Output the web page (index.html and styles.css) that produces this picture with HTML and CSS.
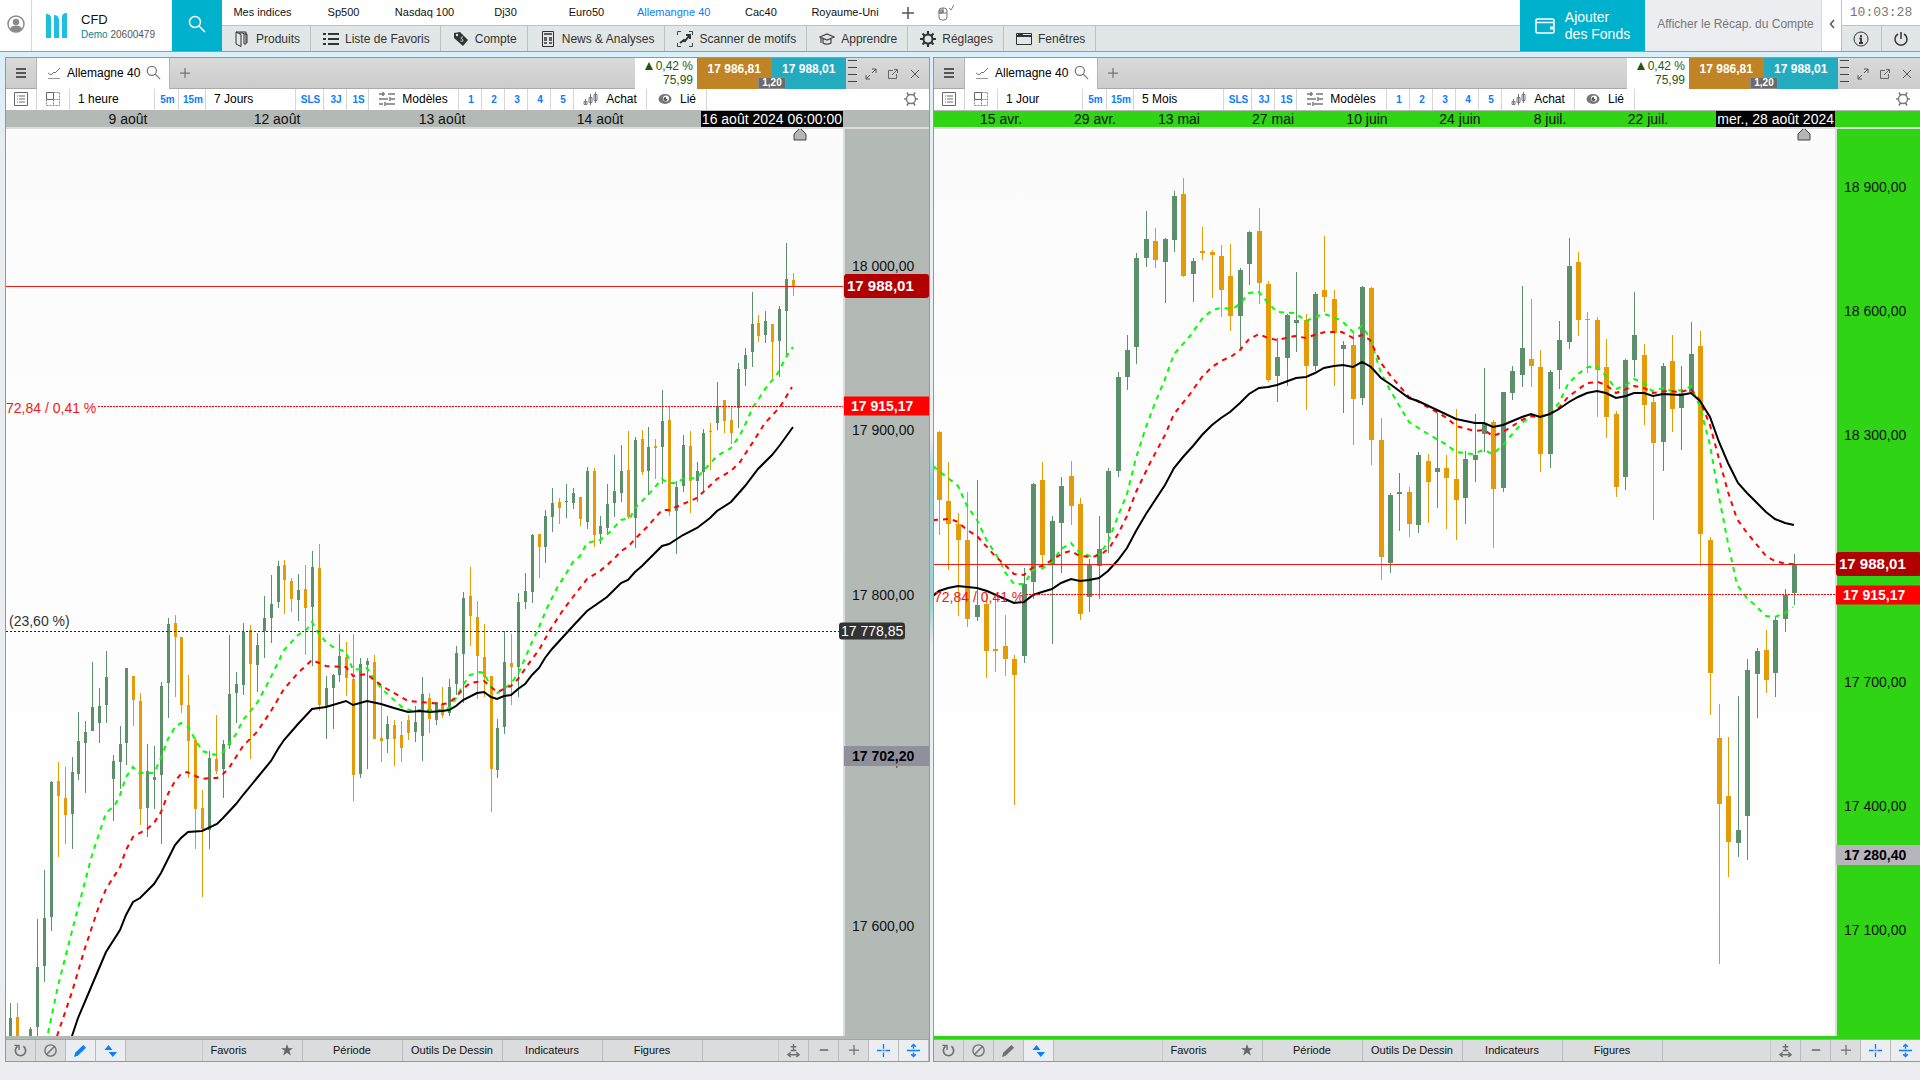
FILE: index.html
```html
<!DOCTYPE html>
<html lang="fr">
<head>
    <meta charset="UTF-8">
    <meta name="viewport" content="width=device-width, initial-scale=1.0">
    <title>CFD - Allemagne 40</title>
    <link rel="stylesheet" href="styles.css">
</head>
<body>

<!-- icons -->
<svg class="sprite" aria-hidden="true">
    <symbol id="i-user" viewBox="0 0 18 18"><circle cx="9" cy="9" r="8" fill="#fff" stroke="#8a8a8a" stroke-width="1.5"/><circle cx="9" cy="7" r="3.2" fill="#8a8a8a"/><path d="M3 14c1-3 3-3.5 6-3.5s5 .5 6 3.500c-3 3.500-9 3.500-12 0z" fill="#8a8a8a"/></symbol>
    <symbol id="i-logo" viewBox="0 0 22 26"><path d="M0 1c3 0 5 1 5 4v20H0zM8 2c2 0 5 1 5 5v18H8zM21 0v25h-5V4c0-3 2-4 5-4z" fill="#1cbfdc"/></symbol>
    <symbol id="i-search" viewBox="0 0 18 18"><circle cx="7" cy="7" r="5.500" fill="none" stroke="currentColor" stroke-width="1.500"/><path d="M11 11l6 6" stroke="currentColor" stroke-width="1.500"/></symbol>
    <symbol id="i-products" viewBox="0 0 16 16"><path d="M2 1h10v12h-2M2 1v12l5 2.500V3.500L2 1M5 2h4l1 1v10M10 3h3v9" fill="none" stroke="#333"/></symbol>
    <symbol id="i-list" viewBox="0 0 16 16"><path d="M5 3h11M5 8h11M5 13h11M0 3h3M0 8h3M0 13h3" stroke="#333" stroke-width="2"/></symbol>
    <symbol id="i-tag" viewBox="0 0 16 16"><path d="M1 2l6-1 8 8-5 6-9-8z" fill="#333"/><circle cx="4" cy="4" r="1.200" fill="#e1e7e6"/><path d="M10 6c-3 0-2 2-.5 2.500S10 11 7.500 10" stroke="#e1e7e6" fill="none"/></symbol>
    <symbol id="i-news" viewBox="0 0 16 16"><path d="M2.500.5h11v15h-11z" fill="none" stroke="#333"/><path d="M4 3h8M4 7h3M4 9h3M9 7h3M9 9h3M4 12h3M9 12h3" stroke="#333" stroke-width="1.500"/></symbol>
    <symbol id="i-scan" viewBox="0 0 16 16"><path d="M.5 4V.5H4M12 .5h3.500V4M.5 12v3.500H4M12 15.500h3.500V12" fill="none" stroke="#444"/><path d="M3 12l4-3 1 1 4-5M9 4h4v4" fill="none" stroke="#333" stroke-width="2"/></symbol>
    <symbol id="i-learn" viewBox="0 0 16 16"><path d="M1 6l7-3 7 3-7 3zM4 8v4c2 1.500 6 1.500 8 0V8M2 7v5" fill="none" stroke="#444" stroke-width="1.200"/></symbol>
    <symbol id="i-cog" viewBox="0 0 16 16"><circle cx="8" cy="8" r="4.500" fill="none" stroke="currentColor" stroke-width="2"/><path d="M8 0v3M8 13v3M0 8h3M13 8h3M2.500 2.500l2 2M11.500 11.500l2 2M13.500 2.500l-2 2M4.500 11.500l-2 2" stroke="currentColor" stroke-width="2.200"/></symbol>
    <symbol id="i-window" viewBox="0 0 16 16"><path d="M.5 2.500h15v11H.5z" fill="none" stroke="#333"/><path d="M1 5h14M2 3.500h5" stroke="#333" stroke-width="2"/></symbol>
    <symbol id="i-mouse" viewBox="0 0 16 18"><rect x="1" y="4" width="8" height="12" rx="3" fill="none" stroke="#777"/><path d="M1 9h8M5 4v5M1 6h4v3H1z" stroke="#777" fill="#aaa"/><path d="M11 4l2 2 3-5" fill="none" stroke="#777"/></symbol>
    <symbol id="i-wallet" viewBox="0 0 20 16"><path d="M1 2.500C1 1 2 1 3 1h14c1 0 2 0 2 1.500v11c0 1-1 1.500-2 1.500H3c-1 0-2-.5-2-1.500zM1 4.500h18" fill="none" stroke="#fff" stroke-width="1.500"/><path d="M15 8.500h3v3h-3z" fill="#fff"/></symbol>
    <symbol id="i-info" viewBox="0 0 16 16"><circle cx="8" cy="8" r="7" fill="none" stroke="#333"/><path d="M8 4v2M6.500 7.500H8V12M6 12h4" stroke="#333" stroke-width="1.800" fill="none"/></symbol>
    <symbol id="i-power" viewBox="0 0 16 16"><path d="M5 3a6 6 0 1 0 6 0M8 1v7" fill="none" stroke="#333" stroke-width="1.500"/></symbol>
    <symbol id="i-menu" viewBox="0 0 12 12"><path d="M1 2h10M1 6h10M1 10h10" stroke="#555" stroke-width="2"/></symbol>
    <symbol id="i-chart" viewBox="0 0 14 14"><path d="M1 7l3 2 3-3 1 1 5-5" fill="none" stroke="#777"/><path d="M1 12.500h12" stroke="#999"/></symbol>
    <symbol id="i-plus" viewBox="0 0 12 12"><path d="M6 0v12M0 6h12" stroke="currentColor" stroke-width="1.500"/></symbol>
    <symbol id="i-minus" viewBox="0 0 12 12"><path d="M1 6h10" stroke="currentColor" stroke-width="2"/></symbol>
    <symbol id="i-expand" viewBox="0 0 12 12"><path d="M7 1h4v4M11 1L7 5M1 7v4h4M1 11l4-4" fill="none" stroke="#555"/></symbol>
    <symbol id="i-popout" viewBox="0 0 12 12"><path d="M6 2.500H1.500v8h8V6M7 1.500h3.500V5M10.500 1.500L5 7" fill="none" stroke="#666"/></symbol>
    <symbol id="i-close" viewBox="0 0 12 12"><path d="M2 2l8 8M10 2l-8 8" stroke="#555"/></symbol>
    <symbol id="i-details" viewBox="0 0 14 14"><path d="M.5.5h13v13H.5zM3 4h1M3 7h1M3 10h1M5 4h6M5 7h6M5 10h6" fill="none" stroke="#666"/></symbol>
    <symbol id="i-grid" viewBox="0 0 16 16"><path d="M1.500 1.500h7v7h-7z" fill="none" stroke="#666"/><path d="M8.500 1.500h6v13h-13v-6M8.500 8.500h6M8.500 8.500v6" fill="none" stroke="#888" stroke-dasharray="2 1"/></symbol>
    <symbol id="i-sliders" viewBox="0 0 16 14"><path d="M0 2h6M9 2h7M0 7h9M12 7h4M0 12h4M7 12h9M4 0v4M11 5v4M6 10v4" stroke="#777" stroke-width="1.500"/></symbol>
    <symbol id="i-candles" viewBox="0 0 16 14"><path d="M2.500 7v6M1 9.500h3v3H1zM7.500 2v11M6 5.500h3v5H6zM12.500 0v11M11 2.500h3v6h-3z" fill="#fff" stroke="#777"/></symbol>
    <symbol id="i-eye" viewBox="0 0 16 12"><ellipse cx="8" cy="6" rx="6.500" ry="5" fill="#777"/><circle cx="9" cy="5.500" r="3" fill="#fff"/><path d="M9 4a2 2 0 1 0 1.500 2L9 6z" fill="#555"/></symbol>
    <symbol id="i-gear" viewBox="0 0 16 16"><circle cx="8" cy="8" r="4.500" fill="none" stroke="#777" stroke-width="1.300"/><path d="M5.500 4l-1.500-2.500M10.500 4l1.500-2.500M5.500 12l-1.500 2.500M10.500 12l1.500 2.500M1 8h2.500M12.500 8H15" stroke="#777" stroke-width="1.500"/></symbol>
    <symbol id="i-reload" viewBox="0 0 16 16"><path d="M11 3.500a5.500 5.500 0 1 1-6 0" fill="none" stroke="#707070" stroke-width="1.800"/><path d="M1.500 2.500h5v5" fill="none" stroke="#707070" stroke-width="1.500"/></symbol>
    <symbol id="i-ban" viewBox="0 0 16 16"><circle cx="8" cy="8" r="6" fill="none" stroke="#707070" stroke-width="1.500"/><path d="M4 12l8-8" stroke="#707070" stroke-width="1.500"/></symbol>
    <symbol id="i-pencil" viewBox="0 0 16 16"><path d="M1 15l1.500-5L11 2l3 3-9 8.500z" fill="currentColor"/></symbol>
    <symbol id="i-updown" viewBox="0 0 16 16"><path d="M1.500 7.500L6 2l4 5.500zM6 9.500h9L10.500 15z" fill="#0a80ff"/></symbol>
    <symbol id="i-star" viewBox="0 0 14 14"><path d="M7 0l1.700 5H14L9.800 8l1.700 5.500L7 10.300 2.500 13.500 4.200 8 0 5h5.300z" fill="#666"/></symbol>
    <symbol id="i-zoom" viewBox="0 0 16 16"><path d="M8 1v7M5 4h6M5 8h6M2 12.500h12M5 10l-3 2.500L5 15M11 10l3 2.500-3 2.500" fill="none" stroke="#707070" stroke-width="1.500"/></symbol>
    <symbol id="i-cross" viewBox="0 0 16 16"><path d="M8 1v5M8 10v5M1 8h5M7 8h2M10 8h5" stroke="#0a80ff" stroke-width="1.500"/></symbol>
    <symbol id="i-vfit" viewBox="0 0 16 16"><path d="M1 8h14M8 2v4M8 10v4M5.500 4L8 1.500 10.500 4M5.500 12L8 14.500 10.500 12" fill="none" stroke="#0a80ff" stroke-width="1.500"/></symbol>
</svg>

<header class="topbar">
    <button class="user" aria-label="Profil"><svg width="18" height="18"><use href="#i-user"/></svg></button>
    <div class="account">
        <svg width="22" height="26"><use href="#i-logo"/></svg>
        <div>
            <div class="account-type">CFD</div>
            <div class="account-id">Demo <span>20600479</span></div>
        </div>
    </div>
    <button class="search" aria-label="Rechercher"><svg width="18" height="18"><use href="#i-search"/></svg></button>
    <div class="nav">
        <nav class="views">
            <a href="#">Mes indices</a>
            <a href="#">Sp500</a>
            <a href="#">Nasdaq 100</a>
            <a href="#">Dj30</a>
            <a href="#">Euro50</a>
            <a href="#" class="current">Allemangne 40</a>
            <a href="#">Cac40</a>
            <a href="#">Royaume-Uni</a>
            <button aria-label="Ajouter"><svg width="12" height="12"><use href="#i-plus"/></svg></button>
            <button aria-label="Souris"><svg width="16" height="18"><use href="#i-mouse"/></svg></button>
        </nav>
        <nav class="menu">
            <button><svg><use href="#i-products"/></svg>Produits</button>
            <button><svg><use href="#i-list"/></svg>Liste de Favoris</button>
            <button><svg><use href="#i-tag"/></svg>Compte</button>
            <button><svg><use href="#i-news"/></svg>News &amp; Analyses</button>
            <button><svg><use href="#i-scan"/></svg>Scanner de motifs</button>
            <button><svg><use href="#i-learn"/></svg>Apprendre</button>
            <button><svg><use href="#i-cog"/></svg>Réglages</button>
            <button><svg><use href="#i-window"/></svg>Fenêtres</button>
        </nav>
    </div>
    <button class="funds"><svg width="20" height="18"><use href="#i-wallet"/></svg><span>Ajouter<br>des Fonds</span></button>
    <button class="recap">Afficher le Récap. du Compte</button>
    <button class="collapse" aria-label="Réduire"><svg width="6" height="10" viewBox="0 0 6 10"><path d="M5 1L1.500 5 5 9" fill="none" stroke="#555" stroke-width="1.500"/></svg></button>
    <div class="system">
        <div class="clock">10:03:28</div>
        <div class="system-buttons">
            <button aria-label="Infos"><svg width="16" height="16"><use href="#i-info"/></svg></button>
            <button aria-label="Quitter"><svg width="16" height="16"><use href="#i-power"/></svg></button>
        </div>
    </div>
</header>

<main class="workspace"></main>

<!-- chart window -->
<template id="panel">
    <section class="panel">
        <div class="panel-head">
            <button class="panel-menu" aria-label="Menu"><svg width="12" height="12"><use href="#i-menu"/></svg></button>
            <div class="tab">
                <svg width="14" height="14"><use href="#i-chart"/></svg>
                <span>Allemagne 40</span>
                <svg width="15" height="15"><use href="#i-search"/></svg>
            </div>
            <button class="add-tab" aria-label="Nouvel onglet"><svg width="10" height="10"><use href="#i-plus"/></svg></button>
            <div class="change">
                <div><i class="up"></i>0,42 %</div>
                <div>75,99</div>
            </div>
            <div class="prices">
                <button class="sell">17 986,81</button>
                <button class="buy">17 988,01</button>
                <span class="spread">1,20</span>
            </div>
            <div class="ladder"><i></i><i></i><i></i><i></i></div>
            <button class="win" aria-label="Agrandir"><svg width="12" height="12"><use href="#i-expand"/></svg></button>
            <button class="win" aria-label="Détacher"><svg width="12" height="12"><use href="#i-popout"/></svg></button>
            <button class="win" aria-label="Fermer"><svg width="12" height="12"><use href="#i-close"/></svg></button>
        </div>
        <div class="toolbar">
            <button aria-label="Détails"><svg width="14" height="14"><use href="#i-details"/></svg></button>
            <button aria-label="Disposition"><svg width="16" height="16"><use href="#i-grid"/></svg></button>
            <button class="period unit"></button>
            <button class="quick">5m</button>
            <button class="quick">15m</button>
            <button class="period span"></button>
            <button class="quick">SLS</button>
            <button class="quick">3J</button>
            <button class="quick">1S</button>
            <button><svg width="16" height="14"><use href="#i-sliders"/></svg>Modèles</button>
            <button class="quick">1</button>
            <button class="quick">2</button>
            <button class="quick">3</button>
            <button class="quick">4</button>
            <button class="quick">5</button>
            <button><svg width="16" height="14"><use href="#i-candles"/></svg>Achat</button>
            <button><svg width="16" height="12"><use href="#i-eye"/></svg>Lié</button>
            <button class="gear" aria-label="Options"><svg width="16" height="16"><use href="#i-gear"/></svg></button>
        </div>
        <div class="dates"></div>
        <div class="chart">
            <div class="plot"></div>
            <div class="axis"></div>
        </div>
        <div class="bottombar">
            <button class="tool" aria-label="Recharger"><svg><use href="#i-reload"/></svg></button>
            <button class="tool" aria-label="Effacer"><svg><use href="#i-ban"/></svg></button>
            <button class="tool draw" aria-label="Dessiner"><svg><use href="#i-pencil"/></svg></button>
            <button class="tool on" aria-label="Échelle"><svg><use href="#i-updown"/></svg></button>
            <div class="fill"></div>
            <button class="group fav">Favoris<svg width="12" height="12"><use href="#i-star"/></svg></button>
            <button class="group">Période</button>
            <button class="group">Outils De Dessin</button>
            <button class="group">Indicateurs</button>
            <button class="group">Figures</button>
            <div class="fill"></div>
            <button class="tool" aria-label="Zoom"><svg><use href="#i-zoom"/></svg></button>
            <button class="tool" aria-label="Moins"><svg class="small"><use href="#i-minus"/></svg></button>
            <button class="tool" aria-label="Plus"><svg class="small"><use href="#i-plus"/></svg></button>
            <button class="tool on" aria-label="Réticule"><svg><use href="#i-cross"/></svg></button>
            <button class="tool on" aria-label="Ajuster"><svg><use href="#i-vfit"/></svg></button>
        </div>
    </section>
</template>

<script src="charts.js"></script>
</body>
</html>
```
FILE: styles.css
```css
* {
    box-sizing: border-box;
}
body {
    margin: 0;
    height: 100vh;
    display: flex;
    flex-direction: column;
    overflow: hidden;
    font-family: "Liberation Sans", Arial, sans-serif;
    font-size: 12px;
    color: #111;
    background: #ecedf0;
}
button {
    display: flex;
    align-items: center;
    justify-content: center;
    margin: 0;
    padding: 0;
    border: 0;
    background: none;
    font: inherit;
    color: inherit;
    white-space: nowrap;
    cursor: pointer;
}
svg {
    display: block;
    flex: none;
}
.sprite {
    position: absolute;
    width: 0;
    height: 0;
}

/* top bar */
.topbar {
    display: flex;
    flex: none;
    height: 52px;
    background: #fff;
    border-bottom: 1px solid #8e9cac;
}
.user {
    width: 32px;
    padding-bottom: 3px;
    border-right: 1px solid #d5d8db;
}
.account {
    display: flex;
    align-items: center;
    gap: 13px;
    width: 140px;
    padding-left: 14px;
}
.account-type {
    font-size: 13px;
    line-height: 17px;
}
.account-id {
    font-size: 10px;
    line-height: 13px;
    color: #0c7f96;
}
.account-id span {
    color: #555;
}
.search {
    width: 50px;
    padding-bottom: 4px;
    background: #00b1cd;
    color: #fff;
}
.nav {
    flex: 1;
    min-width: 0;
}
.views {
    display: flex;
    height: 25px;
    font-size: 11px;
}
.views a {
    min-width: 81px;
    padding: 0 10px;
    line-height: 25px;
    text-align: center;
    text-decoration: none;
    color: #111;
}
.views a.current {
    color: #0a7cff;
}
.views button {
    width: 38px;
    color: #555;
}
.menu {
    display: flex;
    height: 26px;
    background: #e1e7e6;
    border-top: 1px solid #bcc2c2;
    color: #333;
}
.menu button {
    gap: 6px;
    padding: 0 10px 0 12px;
    border-right: 1px solid #bcc2c2;
}
.menu svg {
    width: 16px;
    height: 16px;
}
.funds {
    width: 125px;
    gap: 10px;
    background: #00b1cd;
    color: #fff;
    font-size: 14px;
    line-height: 17px;
    text-align: left;
}
.recap {
    width: 177px;
    padding: 0 0 3px 5px;
    background: #ecedf0;
    border-right: 1px solid #d5d8db;
    color: #777;
}
.collapse {
    width: 19px;
    padding-bottom: 4px;
}
.system {
    width: 79px;
    border-left: 1px solid #bcc2c2;
}
.clock {
    height: 25px;
    line-height: 26px;
    text-align: center;
    font-family: "Liberation Mono", "Courier New", monospace;
    font-size: 13px;
    color: #777;
}
.system-buttons {
    display: flex;
    height: 26px;
    background: #e1e7e6;
    border-top: 1px solid #bcc2c2;
}
.system-buttons button {
    flex: 1;
}
.system-buttons button + button {
    border-left: 1px solid #bcc2c2;
}

/* workspace, the last window runs just past the right edge */
.workspace {
    flex: 1;
    min-height: 0;
    display: grid;
    grid-template-columns: 925fr 989fr;
    gap: 3px;
    margin-right: -2px;
    padding: 5px 0 18px 5px;
    background:
        radial-gradient(120px 105px at 931px 490px, #9fd0d8 60%, rgba(159, 208, 216, 0)),
        linear-gradient(#d9eff9, #ecedf0 120px);
}
.panel {
    display: flex;
    flex-direction: column;
    min-width: 0;
    border: 1px solid #95979a;
    background: #fff;
}
.panel-head {
    display: flex;
    height: 31px;
    background: linear-gradient(#dadada, #cbcbcb);
}
.panel-menu {
    width: 31px;
    border-right: 1px solid #b4b4b4;
    border-bottom: 1px solid #aaa;
}
.tab {
    display: flex;
    align-items: center;
    gap: 6px;
    width: 132px;
    padding: 0 0 2px 10px;
    background: #fff;
    color: #000;
    white-space: nowrap;
}
.tab svg {
    color: #777;
}
.add-tab {
    flex: 1;
    justify-content: flex-start;
    padding-left: 10px;
    border-bottom: 1px solid #aaa;
    border-left: 1px solid #b4b4b4;
    color: #777;
}
.change {
    width: 62px;
    padding: 1px 4px 0 0;
    background: #fff;
    color: #1e5a12;
    line-height: 14px;
    text-align: right;
    white-space: nowrap;
}
.up {
    display: inline-block;
    margin-right: 3px;
    border: 4px solid transparent;
    border-top: 0;
    border-bottom: 8px solid #1e5a12;
}
.prices {
    position: relative;
    display: flex;
    width: 149px;
    color: #fff;
    font-weight: bold;
}
.prices button {
    flex: 1;
    padding-bottom: 10px;
}
.sell {
    background: #c08426;
}
.buy {
    background: #25abc0;
}
.spread {
    position: absolute;
    left: 61px;
    bottom: 0;
    width: 28px;
    border: 1px solid #8c8c8c;
    background: #6b6b6b;
    font-size: 10px;
    line-height: 10px;
    text-align: center;
}
.ladder {
    width: 14px;
    padding: 2px 3px 0 2px;
    display: flex;
    flex-direction: column;
    gap: 6px;
}
.ladder i {
    height: 1px;
    background: #444;
}
.win {
    width: 22px;
}
.win:last-child {
    margin-right: 3px;
}
.panel-head .ladder, .panel-head .win {
    flex: none;
}

/* toolbar */
.toolbar {
    display: grid;
    grid-template-columns: 31px 33px 85px 24px 27px 90px 28px 23px 22px 90px repeat(5, 23px) 73px 60px 1fr;
    height: 22px;
    border-bottom: 1px solid #b8b8b8;
    color: #000;
}
.toolbar button {
    gap: 7px;
    padding-bottom: 2px;
    border-right: 1px solid #d6d6d6;
}
.toolbar .period {
    justify-content: flex-start;
    padding-left: 8px;
}
.toolbar .quick {
    font-size: 10px;
    font-weight: bold;
    padding: 0 0 0 2px;
    color: #0a7cff;
}
.toolbar .gear {
    justify-content: flex-end;
    padding-right: 10px;
    border-right: 0;
}

/* chart */
.dates {
    position: relative;
    height: 18px;
    background: var(--axis);
    border-bottom: 2px solid #dcdcdc;
    font-size: 14px;
    line-height: 16px;
    white-space: nowrap;
}
.dates span {
    position: absolute;
    transform: translateX(-50%);
}
.dates .cursor-date {
    right: 86px;
    padding: 0 1px;
    transform: none;
    background: #000;
    color: #fff;
}
.chart {
    flex: 1;
    min-height: 0;
    display: flex;
    border-bottom: 3px solid var(--axis);
    font-size: 14px;
}
.plot {
    position: relative;
    flex: 1;
    min-width: 0;
    overflow: hidden;
    background: linear-gradient(#fbfbfb, #fff);
}
.plot svg {
    position: absolute;
    width: 100%;
    height: 100%;
}
.note {
    position: absolute;
    left: 0;
    line-height: 16px;
    white-space: nowrap;
}
.note.red {
    margin-top: 2px;
    color: #f01818;
    transform: translateY(-50%);
}
.note.level {
    left: 3px;
    color: #333;
    transform: translateY(-110%);
}
.axis {
    position: relative;
    width: 86px;
    background: var(--axis);
    border-left: 2px solid #dcdcdc;
}
.price {
    position: absolute;
    left: -1px;
    right: 0;
    padding: 0 0 2px 8px;
    line-height: 20px;
    transform: translateY(-50%);
    white-space: nowrap;
}
.price.last {
    padding: 0 0 0 3px;
    border-radius: 3px;
    background: #b10000;
    color: #fff;
    font-size: 15px;
    font-weight: bold;
    line-height: 24px;
}
.price.prev {
    padding: 0 0 0 7px;
    background: #f00;
    color: #fff;
    font-weight: bold;
    line-height: 19px;
}
.price.fibo {
    left: -6px;
    right: auto;
    padding: 0 2px;
    border-radius: 3px;
    background: #333;
    color: #fff;
    line-height: 17px;
}
.price.pointer {
    margin-top: -2px;
    padding-bottom: 0;
    background: var(--pointer);
    color: #000;
    font-weight: bold;
}

/* bottom bar */
.bottombar {
    display: flex;
    height: 22px;
    border-top: 1px solid #a5a5a5;
    background: #dbdcde;
    font-size: 11px;
}
.bottombar button {
    border-right: 1px solid #b8babd;
    padding-bottom: 1px;
}
.tool {
    width: 30px;
    color: #707070;
}
.tool svg {
    width: 15px;
    height: 15px;
}
.tool svg.small {
    width: 10px;
    height: 10px;
}
.bottombar .tool.on {
    background: #ecedf0;
    color: #0a80ff;
}
.fill {
    flex: 1;
    border-right: 1px solid #c6c8ca;
}
.group {
    width: 100px;
}
.bottombar .fav {
    justify-content: space-between;
    padding: 0 9px 1px 8px;
}
```
FILE: charts.js
```js
// candles: [x, high, body top, body bottom, low, 1 = up / 0 = down]
const hourly = {
    unit: '1 heure',
    span: '7 Jours',
    axis: '#b3b9b5',
    pointerColor: '#8f909c',
    box: [6, 129, 837, 907],
    toY: p => 266.5 + (18000 - p) * 1.65,
    body: 3,
    dates: [['9 août', 128], ['12 août', 277], ['13 août', 442], ['14 août', 600]],
    cursorDate: '16 août 2024 06:00:00',
    prices: [18000, 17900, 17800, 17700, 17600],
    pointer: 17702.20,
    fibo: 17778.85,
    prevFrom: 98,
    marker: 800,
    drawing: true,
    candles: [
        [10,1003,1018,1036,1036,1],[17,1003,1017,1036,1036,0],[30,1027,1029,1036,1036,1],[37,919,967,1027,1036,1],
        [44,870,918,966,982,1],[51,781,782,917,931,1],[58,762,781,796,857,0],[65,767,798,815,844,0],
        [72,757,772,814,849,1],[78,712,741,774,780,1],[85,721,732,743,793,1],[92,662,707,731,731,1],
        [99,688,706,723,743,1],[106,651,677,705,723,1],[113,755,761,779,821,1],[120,726,744,762,789,1],
        [126,668,668,743,765,1],[133,676,676,700,726,0],[140,693,701,809,825,0],[147,744,771,808,837,1],
        [154,746,777,780,809,1],[161,682,686,775,844,1],[168,618,624,683,718,1],[175,615,623,637,697,0],
        [181,637,637,705,713,0],[188,675,705,741,778,0],[195,738,740,809,849,0],[202,790,808,829,897,0],
        [209,751,758,830,849,1],[216,715,759,771,774,0],[223,740,744,769,798,1],[229,635,694,745,749,1],
        [236,672,684,693,723,1],[243,623,632,685,695,1],[250,625,630,664,759,0],[257,633,645,665,692,1],
        [264,596,618,631,658,1],[271,575,604,618,643,1],[278,561,566,602,608,1],[284,560,565,580,614,0],
        [291,578,581,599,612,0],[298,574,590,600,621,1],[305,565,589,608,655,0],[312,551,567,607,666,1],
        [319,544,568,705,711,0],[326,676,688,707,739,1],[333,674,675,688,729,1],[339,634,656,675,682,1],
        [346,642,657,678,696,0],[353,634,679,775,801,0],[360,658,664,774,778,1],[367,658,661,665,769,1],
        [374,655,662,739,739,0],[381,686,738,741,762,0],[387,716,724,739,753,1],[394,720,725,739,766,0],
        [401,721,735,748,762,0],[408,715,720,733,740,0],[415,706,722,732,742,1],[422,677,694,736,761,1],
        [429,693,698,719,733,0],[436,702,702,720,725,1],[442,687,704,715,718,0],[449,679,687,713,716,1],
        [456,646,653,684,695,1],[463,592,598,654,703,1],[470,567,596,616,646,0],[477,601,617,656,699,0],
        [484,624,657,677,697,0],[491,676,676,769,812,0],[497,719,728,770,778,1],[504,631,662,727,734,1],
        [511,634,663,667,705,0],[518,593,602,667,697,1],[525,573,591,602,609,1],[532,534,535,592,603,1],
        [539,534,534,547,578,0],[545,510,516,547,563,1],[552,488,503,517,532,1],[559,498,502,508,524,0],
        [566,484,501,502,518,1],[573,488,493,503,509,1],[580,497,497,519,526,0],[587,467,471,522,529,1],
        [594,468,471,535,547,0],[600,516,526,534,544,1],[607,484,504,528,534,1],[614,455,491,503,517,1],
        [621,445,471,493,502,1],[628,431,470,517,519,0],[635,437,440,518,548,1],[642,430,439,472,475,0],
        [648,427,447,471,495,1],[655,439,446,448,479,0],[662,390,421,447,484,1],[669,406,420,512,516,0],
        [676,481,487,511,554,1],[683,435,445,486,492,1],[690,431,446,481,513,0],[697,462,471,481,502,1],
        [703,429,433,472,492,1],[710,423,431,432,470,0],[717,382,406,423,430,1],[724,400,400,421,433,0],
        [731,407,420,433,444,0],[738,363,369,408,428,1],[745,348,355,369,386,1],[752,292,324,352,367,1],
        [758,315,323,336,342,0],[765,311,321,335,343,1],[772,324,324,342,378,0],[779,306,309,341,377,1],
        [786,243,279,311,355,1],[793,273,280,286,296,0]
    ],
    fast: '48,1033 58,986 73,927 82,893 92,855 106,813 115,805 120,795 126,777 133,767 139,773 154,773 161,758 168,739 175,727 181,723 188,727 195,739 202,751 216,755 223,752 236,734 243,720 257,703 270,679 284,650 298,635 307,629 312,622 319,634 326,642 333,647 346,652 353,670 367,668 374,679 381,688 394,700 403,708 413,711 420,710 440,710 449,708 456,698 463,685 470,675 480,672 484,673 491,687 497,693 511,684 520,670 532,642 539,627 547,608 557,588 567,572 573,562 580,556 587,543 600,540 610,532 621,520 630,518 635,508 648,495 662,479 668,483 676,483 683,479 697,478 703,471 717,456 731,448 740,435 745,425 753,407 758,400 765,389 778,373 786,357 793,347',
    mid: '57,1036 72,992 85,948 99,906 106,889 120,867 126,850 133,837 147,829 154,823 161,812 168,794 175,781 181,774 187,772 202,779 210,778 217,778 223,774 229,768 243,746 257,732 271,711 284,689 298,673 312,660 326,666 346,667 353,676 367,674 374,680 387,689 408,701 420,702 443,704 449,703 456,697 463,689 470,683 484,681 497,692 511,686 518,679 532,659 539,650 550,630 563,610 573,597 587,579 600,571 614,559 621,551 628,547 635,539 648,526 662,510 669,510 676,507 690,501 697,498 717,479 731,471 740,462 753,442 765,423 780,407 792,387',
    slow: '72,1036 78,1018 92,985 106,952 120,930 126,915 133,902 140,898 154,884 161,873 168,859 175,845 181,838 188,832 202,831 217,824 223,818 236,804 243,795 257,778 271,761 278,749 284,740 298,724 312,709 326,707 346,701 353,705 367,701 381,704 394,708 408,712 420,711 430,712 442,711 449,710 456,706 463,700 477,693 484,692 491,697 497,699 504,696 511,695 518,689 525,684 532,675 539,668 545,658 552,649 573,626 587,611 607,597 621,583 628,580 635,572 642,566 662,546 669,544 683,535 697,528 710,518 717,511 731,502 745,486 758,469 772,455 780,445 793,427'
};

const daily = {
    unit: '1 Jour',
    span: '5 Mois',
    axis: '#2fd414',
    pointerColor: '#b8b4bc',
    box: [934, 129, 901, 907],
    toY: p => 188 + (18900 - p) * 0.4128,
    body: 5,
    dates: [['15 avr.', 1001], ['29 avr.', 1095], ['13 mai', 1179], ['27 mai', 1273], ['10 juin', 1367], ['24 juin', 1460], ['8 juil.', 1550], ['22 juil.', 1648]],
    cursorDate: 'mer., 28 août 2024',
    prices: [18900, 18600, 18300, 17700, 17400, 17100],
    pointer: 17280.40,
    prevFrom: 1026,
    marker: 1804,
    candles: [
        [939,431,432,500,535,0],[948,462,501,524,570,0],[958,513,524,540,616,0],[967,492,540,619,627,0],
        [977,480,605,617,621,1],[986,594,604,651,678,0],[995,597,649,651,672,0],[1005,615,646,659,676,0],
        [1014,655,659,675,805,0],[1024,568,584,656,663,1],[1033,483,484,582,599,1],[1042,462,480,555,566,0],
        [1052,516,521,564,644,1],[1061,477,486,523,573,1],[1071,461,476,506,525,0],[1080,498,504,614,620,0],
        [1089,559,564,597,612,1],[1099,516,549,566,599,1],[1108,468,471,533,553,1],[1118,372,377,471,477,1],
        [1127,335,350,377,390,1],[1136,253,258,347,364,1],[1146,211,239,258,267,1],[1155,228,241,260,268,0],
        [1165,238,239,262,303,1],[1174,191,196,240,252,1],[1183,178,194,276,277,0],[1193,258,261,274,302,1],
        [1202,227,251,253,260,0],[1212,250,252,255,298,0],[1221,245,256,290,317,0],[1230,244,276,316,331,0],
        [1240,268,270,316,348,1],[1249,231,232,264,285,1],[1259,208,231,283,304,0],[1268,281,284,380,382,0],
        [1277,338,357,376,402,1],[1287,314,315,358,386,1],[1296,272,320,323,352,1],[1306,314,320,366,410,0],
        [1315,292,294,366,371,1],[1324,236,290,297,312,0],[1334,290,299,333,386,0],[1343,341,345,349,413,1],
        [1353,333,345,399,445,0],[1362,286,287,398,405,1],[1371,287,288,440,465,0],[1381,418,440,557,580,0],
        [1390,493,495,563,573,1],[1399,473,492,494,531,1],[1409,487,492,524,537,0],[1418,452,455,525,533,1],
        [1428,454,461,482,523,0],[1437,413,468,472,508,1],[1446,455,468,478,529,0],[1456,409,479,500,540,0],
        [1465,451,459,498,524,1],[1475,414,455,460,482,1],[1484,368,423,434,452,1],[1493,420,422,489,548,0],
        [1503,392,392,488,492,1],[1512,366,371,393,400,1],[1522,286,348,375,387,1],[1531,299,359,366,387,0],
        [1540,350,367,454,472,0],[1550,370,372,454,468,1],[1559,321,340,370,389,1],[1569,238,266,342,349,1],
        [1578,252,262,320,336,0],[1587,312,319,320,373,0],[1597,317,320,370,417,0],[1606,339,367,417,438,0],
        [1616,411,414,487,497,0],[1625,359,360,477,490,1],[1634,292,335,360,377,1],[1644,344,355,405,425,0],
        [1653,396,402,443,520,0],[1663,363,366,442,471,1],[1672,335,361,409,432,0],[1681,366,393,408,450,1],
        [1691,322,354,392,393,1],[1700,331,346,534,566,0],[1710,537,540,673,715,0],[1719,704,738,804,964,0],
        [1728,737,796,842,877,0],[1738,696,830,843,857,1],[1747,659,670,816,860,1],[1757,648,651,674,718,1],
        [1766,630,650,680,693,0],[1775,616,620,673,697,1],[1785,589,595,619,632,1],[1794,554,564,593,605,1]
    ],
    fast: '933,466 939,471 958,486 967,506 977,520 986,539 1000,561 1005,572 1014,584 1024,584 1033,570 1043,568 1052,562 1061,549 1071,543 1080,553 1090,556 1099,555 1108,542 1118,516 1127,494 1136,458 1146,427 1155,403 1165,379 1174,354 1190,336 1202,319 1212,310 1221,308 1232,309 1240,304 1249,293 1259,292 1268,303 1277,312 1295,313 1306,321 1315,317 1324,314 1334,317 1343,322 1353,332 1362,326 1370,338 1381,373 1390,390 1409,422 1428,434 1447,445 1456,452 1472,454 1484,450 1493,454 1503,445 1522,423 1531,416 1540,418 1550,413 1559,403 1568,384 1578,374 1588,367 1597,367 1606,376 1616,389 1626,385 1634,379 1644,383 1652,391 1663,388 1672,391 1683,390 1691,386 1700,407 1710,445 1719,497 1728,543 1737,585 1747,598 1757,607 1766,616 1775,617 1785,613 1793,607',
    mid: '933,520 950,519 958,522 967,530 977,536 995,556 1005,565 1014,574 1024,575 1032,568 1042,566 1052,560 1063,553 1071,551 1080,556 1093,557 1103,553 1110,547 1118,534 1127,516 1136,492 1150,463 1165,435 1174,414 1190,394 1202,377 1212,367 1221,361 1232,356 1240,350 1249,339 1259,334 1268,338 1277,340 1295,336 1306,338 1317,334 1325,332 1342,332 1353,338 1362,335 1370,340 1381,363 1390,375 1409,397 1417,401 1447,418 1456,426 1475,431 1484,430 1493,436 1503,432 1522,420 1531,416 1540,417 1557,410 1568,397 1587,383 1598,382 1606,385 1616,393 1634,386 1644,388 1653,393 1667,391 1681,392 1691,389 1700,401 1710,425 1719,459 1728,492 1737,519 1747,533 1757,545 1766,556 1775,561 1787,564 1794,564',
    slow: '933,596 939,591 948,588 958,586 977,588 987,591 1005,599 1014,603 1024,602 1033,595 1042,592 1052,589 1061,583 1071,579 1080,581 1089,580 1099,578 1108,571 1118,560 1127,548 1136,531 1146,514 1165,485 1174,468 1183,457 1193,446 1202,435 1212,425 1221,418 1230,412 1240,403 1249,394 1259,388 1268,387 1277,385 1296,378 1306,377 1315,373 1324,368 1334,366 1343,365 1353,367 1362,362 1371,367 1381,378 1390,384 1409,398 1418,401 1437,410 1456,419 1475,423 1484,423 1493,427 1503,425 1522,417 1531,414 1540,417 1550,414 1559,409 1569,402 1578,397 1587,393 1597,391 1606,393 1616,398 1626,396 1634,393 1644,393 1653,396 1663,394 1681,395 1691,393 1700,401 1710,417 1719,442 1728,463 1738,483 1747,493 1757,503 1766,512 1775,519 1785,523 1794,525'
};

const LAST = 17988.01;
const PREV = 17915.17;

function format(price) {
    const [whole, cents] = price.toFixed(2).split('.');
    return whole.slice(0, -3) + ' ' + whole.slice(-3) + ',' + cents;
}

function drawPlot(c) {
    const [x0, y0, w, h] = c.box;
    const right = x0 + w;
    const half = (c.body - 1) / 2;
    let out = '';

    c.candles.forEach(([x, high, top, bottom, low, up]) => {
        const color = up ? '#5c906a' : '#e49b07';
        out += `<g fill="${color}"><rect x="${x}" y="${high}" width="1" height="${low - high}"/>`;
        out += `<rect x="${x - half}" y="${top}" width="${c.body}" height="${bottom - top}"/></g>`;
    });

    out += `<g fill="none" stroke-width="2" shape-rendering="auto">
        <polyline points="${c.fast}" stroke="#0f0" stroke-dasharray="5 5"/>
        <polyline points="${c.mid}" stroke="#f00" stroke-dasharray="5 5"/>
        <polyline points="${c.slow}" stroke="#000"/></g>`;

    // price levels
    const level = (price, from, color, dash) => {
        const y = Math.floor(c.toY(price)) + 0.5;
        return `<path d="M${from} ${y}H${right}" stroke="${color}" stroke-dasharray="${dash}" shape-rendering="auto"/>`;
    };
    out += level(PREV, c.prevFrom, '#f00', '2 1');
    if (c.fibo) out += level(c.fibo, x0, '#222', '2 2');
    out += level(LAST, x0, '#ee1c10', 'none');

    const m = c.marker;
    out += `<polygon points="${m - 6},140 ${m - 6},134 ${m},128 ${m + 6},134 ${m + 6},140" fill="#b5b5b5" stroke="#444" shape-rendering="auto"/>`;

    return `<svg viewBox="${c.box.join(' ')}" preserveAspectRatio="none" shape-rendering="crispEdges">${out}</svg>`;
}

function addPanel(c) {
    const panel = document.getElementById('panel').content.cloneNode(true).firstElementChild;
    const [x0, y0, w, h] = c.box;
    const top = price => ((c.toY(price) - y0) / h * 100).toFixed(2) + '%';
    const tag = (price, name) => `<span class="price ${name}" style="top:${top(price)}">${format(price)}</span>`;

    panel.style.setProperty('--axis', c.axis);
    panel.style.setProperty('--pointer', c.pointerColor);
    panel.querySelector('.unit').textContent = c.unit;
    panel.querySelector('.span').textContent = c.span;
    if (c.drawing) panel.querySelector('.draw').classList.add('on');

    panel.querySelector('.dates').innerHTML = c.dates
        .map(([text, x]) => `<span style="left:${((x - x0) / (w + 86) * 100).toFixed(2)}%">${text}</span>`)
        .join('') + `<span class="cursor-date">${c.cursorDate}</span>`;

    let plot = drawPlot(c) + `<span class="note red" style="top:${top(PREV)}">72,84 / 0,41 %</span>`;
    if (c.fibo) plot += `<span class="note level" style="top:${top(c.fibo)}">(23,60 %)</span>`;
    panel.querySelector('.plot').innerHTML = plot;

    let axis = c.prices.map(p => tag(p, '')).join('');
    axis += tag(c.pointer, 'pointer') + tag(LAST, 'last') + tag(PREV, 'prev');
    if (c.fibo) axis += tag(c.fibo, 'fibo');
    panel.querySelector('.axis').innerHTML = axis;

    document.querySelector('.workspace').appendChild(panel);
}

addPanel(hourly);
addPanel(daily);
```
